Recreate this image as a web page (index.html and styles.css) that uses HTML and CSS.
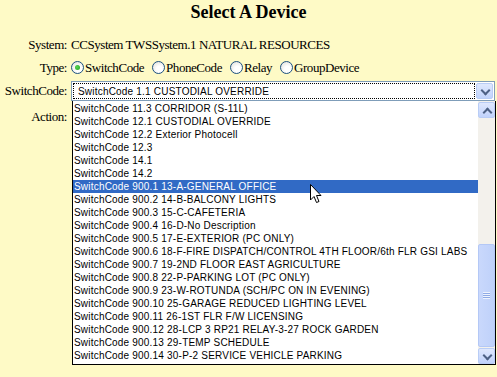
FILE: index.html
```html
<!DOCTYPE html>
<html lang="en">

<head>
    <meta charset="UTF-8">
    <title>Select A Device</title>
    <link rel="stylesheet" href="styles.css">
</head>

<body>
    <h1 class="title">Select A Device</h1>

    <div class="device-form">
        <div class="label">System:</div>
        <div class="value">CCSystem TWSSystem.1 NATURAL RESOURCES</div>

        <div class="label">Type:</div>
        <div class="value types">
            <label class="opt"><span class="radio checked"></span>SwitchCode</label>
            <label class="opt"><span class="radio"></span>PhoneCode</label>
            <label class="opt"><span class="radio"></span>Relay</label>
            <label class="opt"><span class="radio"></span>GroupDevice</label>
        </div>

        <div class="label">SwitchCode:</div>
        <div class="value">
            <div class="combo">
                <div class="combo-text">SwitchCode 1.1 CUSTODIAL OVERRIDE</div>
                <div class="sb-btn down"></div>
            </div>
        </div>

        <div class="label action">Action:</div>
        <div class="value">
            <!-- open list of the SwitchCode combo -->
            <div class="dropdown">
                <ul class="options">
                    <li>SwitchCode 11.3 CORRIDOR (S-11L)</li>
                    <li>SwitchCode 12.1 CUSTODIAL OVERRIDE</li>
                    <li>SwitchCode 12.2 Exterior Photocell</li>
                    <li>SwitchCode 12.3</li>
                    <li>SwitchCode 14.1</li>
                    <li>SwitchCode 14.2</li>
                    <li class="selected">SwitchCode 900.1 13-A-GENERAL OFFICE</li>
                    <li>SwitchCode 900.2 14-B-BALCONY LIGHTS</li>
                    <li>SwitchCode 900.3 15-C-CAFETERIA</li>
                    <li>SwitchCode 900.4 16-D-No Description</li>
                    <li>SwitchCode 900.5 17-E-EXTERIOR (PC ONLY)</li>
                    <li>SwitchCode 900.6 18-F-FIRE DISPATCH/CONTROL 4TH FLOOR/6th FLR GSI LABS</li>
                    <li>SwitchCode 900.7 19-2ND FLOOR EAST AGRICULTURE</li>
                    <li>SwitchCode 900.8 22-P-PARKING LOT (PC ONLY)</li>
                    <li>SwitchCode 900.9 23-W-ROTUNDA (SCH/PC ON IN EVENING)</li>
                    <li>SwitchCode 900.10 25-GARAGE REDUCED LIGHTING LEVEL</li>
                    <li>SwitchCode 900.11 26-1ST FLR F/W LICENSING</li>
                    <li>SwitchCode 900.12 28-LCP 3 RP21 RELAY-3-27 ROCK GARDEN</li>
                    <li>SwitchCode 900.13 29-TEMP SCHEDULE</li>
                    <li>SwitchCode 900.14 30-P-2 SERVICE VEHICLE PARKING</li>
                </ul>
                <div class="scrollbar">
                    <div class="sb-btn up"></div>
                    <div class="track">
                        <div class="thumb"><span class="grip"></span></div>
                    </div>
                    <div class="sb-btn down"></div>
                </div>

                <svg class="cursor" width="12" height="20" viewBox="0 0 12 20">
                    <path d="M0.5 0.5 L0.5 16 L4 12.5 L6.5 18.5 L9 17.5 L6.5 11.5 L11 11.5 Z" fill="#fff" stroke="#000" stroke-width="1" />
                </svg>
            </div>
        </div>
    </div>
</body>

</html>
```

FILE: styles.css
```css
* {
    margin: 0;
    padding: 0;
    box-sizing: border-box;
}

body {
    background-color: #fefac6;
    font-family: "Liberation Serif", "Times New Roman", serif;
    font-size: 13px;
    letter-spacing: -0.45px;
    color: #000;
}

.title {
    font-size: 18px;
    letter-spacing: 0;
    text-align: center;
    padding-top: 2px;
    line-height: 20px;
}

.device-form {
    display: grid;
    grid-template-columns: 67px 1fr;
    grid-template-rows: 23px 23px 22px auto;
    column-gap: 4px;
    margin-top: 11px;
    padding-right: 2px;
}

.label {
    text-align: right;
    line-height: 23px;
}

.label.action {
    padding-top: 4px;
}

.value {
    line-height: 23px;
}

.types {
    display: flex;
    align-items: center;
    gap: 8px;
}

.opt {
    display: flex;
    align-items: center;
}

.radio {
    width: 13px;
    height: 13px;
    border-radius: 50%;
    border: 1px solid #1c5180;
    background: radial-gradient(circle at 60% 65%, #ffffff 30%, #dcdcd6 100%);
    margin-right: 1px;
    display: flex;
    align-items: center;
    justify-content: center;
}

.radio.checked::after {
    content: "";
    width: 5px;
    height: 5px;
    border-radius: 50%;
    background: radial-gradient(circle at 40% 40%, #55d451, #21a121);
}

/* combo box */

.combo,
.dropdown {
    font-family: "Liberation Sans", Arial, sans-serif;
    font-size: 10px;
    letter-spacing: 0.2px;
    line-height: 13px;
}

.combo {
    display: flex;
    height: 20px;
    margin-top: 2px;
    border: 1px solid #7f9db9;
    background: #fff;
    padding: 1px;
}

.combo-text {
    flex: 1;
    border: 1px dotted #000;
    padding: 1px 4px;
    margin-right: 1px;
}

.sb-btn {
    width: 17px;
    height: 16px;
    border: 1px solid #b9cdf6;
    border-radius: 2px;
    background: linear-gradient(#dfe8fe, #c1d3fb);
    position: relative;
}

.sb-btn::after {
    content: "";
    position: absolute;
    left: 5px;
    width: 5px;
    height: 5px;
    border-left: 2px solid #4d6185;
    border-top: 2px solid #4d6185;
}

.sb-btn.down::after {
    top: 3px;
    transform: rotate(225deg);
}

.sb-btn.up::after {
    top: 6px;
    transform: rotate(45deg);
}

/* open list */

.dropdown {
    position: relative;
    height: 264px;
    margin-left: 1px;
    margin-right: -1px;
    display: flex;
    background: #fff;
    border: 1px solid #000;
    border-top: none;
}

.options {
    list-style: none;
    flex: 1;
    padding-top: 1px;
}

.options li {
    height: 13px;
    padding-left: 1px;
    white-space: nowrap;
    overflow: hidden;
}

.options li.selected {
    background: #316ac5;
    color: #fff;
}

.scrollbar {
    width: 17px;
    display: flex;
    flex-direction: column;
    background: #f3f1ec;
    padding-top: 1px;
}

.track {
    flex: 1;
    display: flex;
    flex-direction: column;
    justify-content: flex-end;
    padding-bottom: 1px;
}

.thumb {
    height: 103px;
    border: 1px solid #b4c8f6;
    border-radius: 2px;
    background: linear-gradient(90deg, #c9d8fc, #bfd1fa);
    display: flex;
    align-items: center;
    justify-content: center;
}

.grip {
    width: 7px;
    height: 7px;
    background: repeating-linear-gradient(#eef3fe 0 1px, #8faae6 1px 2px);
}

.cursor {
    position: absolute;
    left: 237px;
    top: 83px;
}
```
